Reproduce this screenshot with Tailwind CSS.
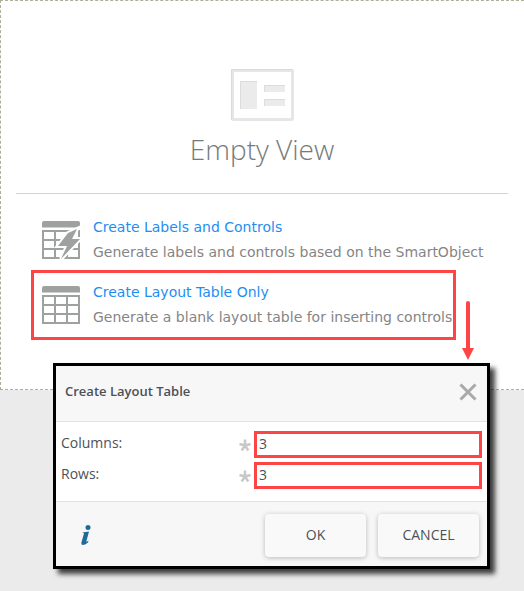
<!DOCTYPE html>
<html lang="en">
<head>
  <meta charset="UTF-8">
  <meta name="viewport" content="width=device-width, initial-scale=1.0">
  <title>Empty View - Create Layout Table</title>
  <script src="https://cdn.jsdelivr.net/npm/@tailwindcss/browser@4"></script>
</head>
<body class="relative min-h-screen bg-[#ebebeb] font-['Open_Sans',sans-serif] text-sm text-[#4b5157]">
  <!-- View canvas -->
  <main class="border border-r-0 border-dashed border-[#b0b09a] bg-white pt-17 pr-4 pb-11 pl-[15px]">
    <div class="flex flex-col items-center border-b border-[#d2d2d2] pb-6">
      <svg class="h-[52px] w-[63px]" viewBox="0 0 63 52" fill="none">
        <rect x="1.5" y="1.5" width="60" height="49" rx="1" stroke="#e6e6e6" stroke-width="3"/>
        <path d="M.5 51V.5H62" stroke="#d9d9d9"/>
        <path d="M9 12h17v28H9zM33 16h21v7H33zM33 30h21v7H33z" fill="#ebebeb"/>
        <path d="M9.500 40V12.500H26M33.500 23V16.500H54M33.500 37V30.500H54" stroke="#dcdcdc"/>
      </svg>
      <h1 class="mt-2 text-[28px] leading-10 font-[350] text-[#757a7a]">Empty View</h1>
    </div>
    <ul class="pt-[21px] pl-[26px] font-['DejaVu_Sans',Verdana,sans-serif] text-[#858585]">
      <li class="flex h-[65px] items-start gap-3">
        <svg class="mt-[6px] h-[39px] w-[39px] shrink-0" viewBox="0 0 39 39">
          <path d="M0 6.500V2Q0 0 2 0H36Q38 0 38 2V6.500Z" fill="#9fa1a0"/>
          <path d="M1 10H37V37H1ZM1 19H37M1 28H37M13 10V37M25 10V37" fill="none" stroke="#9fa1a0" stroke-width="2"/>
          <path d="M35 8L26 12L16 25H25L19 38L38 18H30Z" fill="#9fa1a0" stroke="#fff" stroke-width="4" paint-order="stroke"/>
        </svg>
        <div class="leading-[25px]">
          <a href="#" class="text-[#1e8ef2]">Create Labels and Controls</a>
          <p>Generate labels and controls based on the SmartObject</p>
        </div>
      </li>
      <li class="relative flex h-[65px] items-start gap-3">
        <svg class="mt-[6px] h-[39px] w-[39px] shrink-0" viewBox="0 0 39 39">
          <path d="M0 6.500V2Q0 0 2 0H36Q38 0 38 2V6.500Z" fill="#9fa1a0"/>
          <path d="M1 10H37V37H1ZM1 19H37M1 28H37M13 10V37M25 10V37" fill="none" stroke="#9fa1a0" stroke-width="2"/>
        </svg>
        <div class="leading-[25px]">
          <a href="#" class="text-[#1e8ef2]">Create Layout Table Only</a>
          <p>Generate a blank layout table for inserting controls</p>
        </div>
        <!-- Callout frame and arrow -->
        <div class="pointer-events-none absolute -top-[10px] right-[52px] -left-[11px] h-[70px] border-3 border-[#fe4545]"></div>
        <svg class="absolute top-[21px] right-[34px] h-[59px] w-3" viewBox="0 0 12 59">
          <path d="M6 2V50" stroke="#fe4545" stroke-width="4" stroke-linecap="round"/>
          <path d="M0 47H12L6 59Z" fill="#fe4545"/>
        </svg>
      </li>
    </ul>
  </main>

  <!-- Create Layout Table dialog -->
  <form role="dialog" aria-labelledby="dialogTitle" class="absolute top-[363px] right-[34px] left-[53px] border-3 border-black bg-white shadow-[5px_5px_5px_rgba(0,0,0,0.75)]">
    <header class="flex h-14 items-center justify-between border-b border-[#e2e2e2] bg-[#f7f7f7] pr-[10px] pb-1 pl-[9px]">
      <h2 id="dialogTitle" class="text-[13px] font-semibold">Create Layout Table</h2>
      <button type="button" aria-label="Close">
        <svg class="h-[18px] w-[18px]" viewBox="0 0 18 18" stroke="#a9a9a9" stroke-width="3">
          <path d="M1.500 1.500L16.500 16.500M16.500 1.500L1.500 16.500"/>
        </svg>
      </button>
    </header>
    <div class="space-y-1 px-[5px] pt-[9px] pb-3">
      <div class="flex items-center">
        <label for="columns" class="w-[178px] pb-1">Columns:</label>
        <svg class="mr-[3px] h-3 w-3" viewBox="0 0 12 12" stroke="#c8c8c8" stroke-width="2.500">
          <path d="M6 6.500V.5M6 6.500L11.500 5M6 6.500L9.300 11.500M6 6.500L2.700 11.500M6 6.500L.5 5"/>
        </svg>
        <input id="columns" type="text" value="3" class="h-[27px] min-w-0 flex-1 border-3 border-[#fe4545] bg-white px-[2px] pb-[2px] outline-none">
      </div>
      <div class="flex items-center">
        <label for="rows" class="w-[178px] pb-1">Rows:</label>
        <svg class="mr-[3px] h-3 w-3" viewBox="0 0 12 12" stroke="#c8c8c8" stroke-width="2.500">
          <path d="M6 6.500V.5M6 6.500L11.500 5M6 6.500L9.300 11.500M6 6.500L2.700 11.500M6 6.500L.5 5"/>
        </svg>
        <input id="rows" type="text" value="3" class="h-[27px] min-w-0 flex-1 border-3 border-[#fe4545] bg-white px-[2px] pb-[2px] outline-none">
      </div>
    </div>
    <footer class="flex h-[65px] items-center gap-3 border-t border-[#e2e2e2] bg-[#f7f7f7] pt-[2px] pr-2 pl-[9px]">
      <a href="#" aria-label="Help" class="mr-auto ml-4">
        <svg class="h-5 w-[10px]" viewBox="0 0 10 20" fill="#1f6a99">
          <circle cx="7" cy="2.500" r="2.500"/>
          <path d="M1.500 7.500L8 6.500L5.200 17L7.500 15.500L7 17.500Q4 20 1.500 20Q0 19.500 .4 17.500L3 8.500Z"/>
        </svg>
      </a>
      <button type="submit" class="h-[43px] w-[101px] rounded-sm bg-[#f9f9f9] shadow-[0_1px_5px_rgba(0,0,0,0.25)]">OK</button>
      <button type="button" class="h-[43px] w-[101px] rounded-sm bg-[#f9f9f9] shadow-[0_1px_5px_rgba(0,0,0,0.25)]">CANCEL</button>
    </footer>
  </form>
</body>
</html>
